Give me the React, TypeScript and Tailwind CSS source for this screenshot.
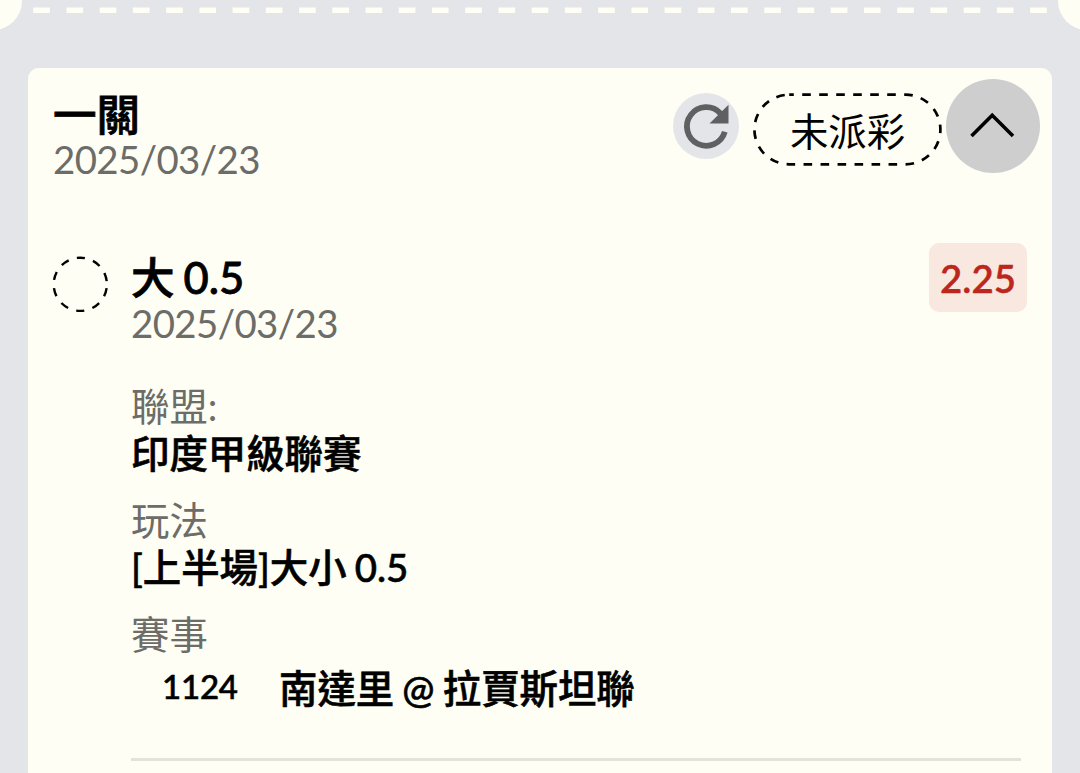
interface BetField {
  label: string
  value: string
}

const fields: BetField[] = [
  { label: '聯盟:', value: '印度甲級聯賽' },
  { label: '玩法', value: '[上半場]大小 0.5' },
]

const TicketDivider = () => {
  return (
    <div className="relative h-[68px] overflow-hidden">
      <div className="absolute -left-[36px] -top-[28px] w-[58px] h-[58px] rounded-full bg-[#fefef4]"></div>
      <div className="absolute -right-[36px] -top-[28px] w-[58px] h-[58px] rounded-full bg-[#fefef4]"></div>
      <svg className="absolute left-0 top-0" width="1080" height="20">
        <line
          x1="33.2"
          y1="10.3"
          x2="1048"
          y2="10.3"
          stroke="#fefef4"
          strokeWidth="5.4"
          strokeDasharray="16.7 16.53"
        />
      </svg>
    </div>
  )
}

const RefreshButton = () => {
  return (
    <button className="w-[66px] h-[66px] mt-[25px] shrink-0 rounded-full bg-[#e4e5e8]">
      <svg width="66" height="66" viewBox="0 0 66 66" fill="none">
        <path d="M51.8 38.8A19.3 19.3 0 1 1 47.5 20.5" stroke="#5f6062" strokeWidth="5.8" />
        <path d="M55.5 11.8V30.5H36.5Z" fill="#5f6062" />
      </svg>
    </button>
  )
}

const StatusBadge = () => {
  return (
    <div className="relative flex items-center justify-center w-[189px] h-[73px] ml-[14px] mt-[25px] shrink-0">
      <svg className="absolute inset-0" width="189" height="73" fill="none">
        <rect
          x="1.4"
          y="1.7"
          width="186"
          height="69.6"
          rx="34.8"
          stroke="#000"
          strokeWidth="2.7"
          strokeDasharray="8.6 8.4"
          strokeDashoffset="4"
        />
      </svg>
      <span className="mt-[2px] text-[38.4px] leading-[46px]">未派彩</span>
    </div>
  )
}

const CollapseButton = () => {
  return (
    <button className="w-[94px] h-[94px] ml-[4px] mt-[11px] shrink-0 rounded-full bg-[#cecece]">
      <svg width="94" height="94" viewBox="0 0 94 94" fill="none">
        <path d="M25.5 57L46.2 36.3L67 57" stroke="#000" strokeWidth="3.6" />
      </svg>
    </button>
  )
}

export default function App() {
  return (
    <div className="w-[1080px] h-[773px] overflow-hidden bg-[#e4e5e8] text-black font-['Lato','Noto_Sans_CJK_TC',sans-serif]">
      <TicketDivider />
      <div className="mx-[28px] h-[720px] rounded-t-[11px] bg-[#fefef4]">
        <div className="flex pl-[25px] pr-[12px]">
          <div className="grow pt-[23px]">
            <h2 className="text-[43.5px] leading-[46px] font-medium [-webkit-text-stroke:0.8px_black]">一關</h2>
            <p className="-mt-px text-[38.4px] leading-[46px] tracking-[-0.6px] text-[#6c6c68]">2025/03/23</p>
          </div>
          <RefreshButton />
          <StatusBadge />
          <CollapseButton />
        </div>

        <div className="flex pl-[24px] pr-[25px] mt-[71px]">
          <svg className="mt-[3px] shrink-0" width="57" height="57" fill="none">
            <circle
              cx="28.3"
              cy="28.3"
              r="26.6"
              stroke="#000"
              strokeWidth="2.4"
              strokeDasharray="8.3 8.41"
              strokeDashoffset="-4"
            />
          </svg>
          <div className="grow ml-[22px]">
            <h3 className="mt-px text-[43.5px] leading-[46px] font-medium [word-spacing:-2px] [-webkit-text-stroke:0.8px_black]">
              大 0.5
            </h3>
            <p className="text-[38.4px] leading-[46px] tracking-[-0.6px] text-[#6c6c68]">2025/03/23</p>
          </div>
          <div className="flex items-center justify-center w-[98px] h-[69px] -mt-[10px] pt-[3px] rounded-[10px] bg-[#f8e8e0] text-[38.4px] font-semibold text-[#bb271c] [-webkit-text-stroke:0.4px_#bb271c]">
            2.25
          </div>
        </div>

        <div className="ml-[103px] mr-[31px] mt-[37px] text-[38.4px] leading-[46px] [word-spacing:-1.5px]">
          {fields.map((field) => (
            <div key={field.label} className="mb-[21px]">
              <p className="text-[#6c6c68]">{field.label}</p>
              <p className="mt-px font-medium [-webkit-text-stroke:0.6px_black]">{field.value}</p>
            </div>
          ))}
          <p className="text-[#6c6c68]">賽事</p>
          <div className="flex items-center mt-[8px] pl-[31px] font-medium [-webkit-text-stroke:0.6px_black]">
            <span className="w-[117px] text-[33px] tracking-[-0.2px] -mt-[4px]">1124</span>
            <span>南達里 @ 拉賈斯坦聯</span>
          </div>
          <div className="mt-[47px] h-[3px] bg-[#e3e3dc]"></div>
        </div>
      </div>
    </div>
  )
}
